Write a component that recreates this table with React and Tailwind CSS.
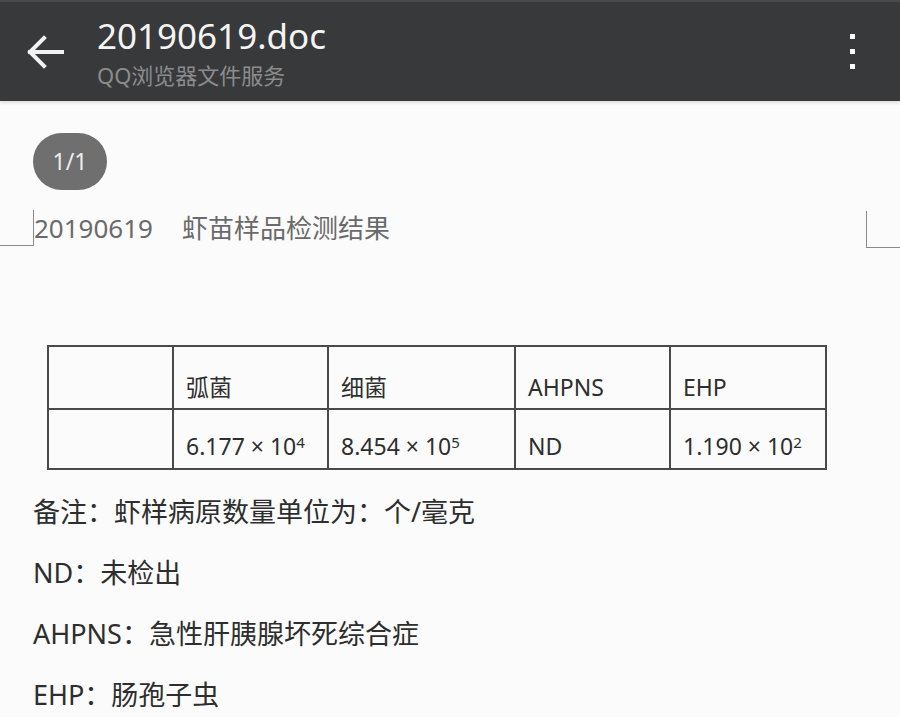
import React from "react";

const F = { fontFamily: '"Noto Sans", "Noto Sans CJK SC", sans-serif' };

function Sup({ base, exp }) {
  return (
    <span>
      {base}
      <span className="text-[15px] align-[7px]">{exp}</span>
    </span>
  );
}

export default function App() {
  const cols = ["w-[125px]", "w-[155px]", "w-[187px]", "w-[155px]", "flex-1"];
  const head = ["", "弧菌", "细菌", "AHPNS", "EHP"];
  const vals = [
    "",
    <Sup base="6.177 × 10" exp="4" />,
    <Sup base="8.454 × 10" exp="5" />,
    "ND",
    <Sup base="1.190 × 10" exp="2" />,
  ];
  return (
    <div className="w-[900px] h-[717px] overflow-hidden bg-[#fbfbfb]" style={F}>
      {/* Header */}
      <div className="h-[101px] bg-[#38393b] border-t-2 border-[#4a4b4d] flex items-start relative shadow-[0_2px_3px_rgba(0,0,0,0.12)]">
        <div className="w-[97px] h-full flex items-start pl-[27px] pt-[33px]">
          <svg width="38" height="34" viewBox="0 0 38 34" fill="none" stroke="#f2f2f2" strokeWidth="4" strokeLinecap="square">
            <path d="M3 17 H35" />
            <path d="M17 3 L3 17 L17 31" />
          </svg>
        </div>
        <div className="flex flex-col pt-[12px]">
          <div className="text-[35px] leading-[44px] text-[#f4f4f4]">20190619.doc</div>
          <div className="text-[22px] leading-[28px] text-[#8c8c8d] mt-[3px]">QQ浏览器文件服务</div>
        </div>
        <div className="ml-auto mr-[45px] pt-[32px] flex flex-col gap-[10px]">
          <div className="w-[5px] h-[5px] bg-white" />
          <div className="w-[5px] h-[5px] bg-white" />
          <div className="w-[5px] h-[5px] bg-white" />
        </div>
      </div>

      {/* Page */}
      <div className="pt-[32px]">
        <div className="ml-[33px] w-[74px] h-[57px] rounded-full bg-[#6f6f6f] flex items-center justify-center text-[23px] text-[#ececec]">
          1/1
        </div>

        <div className="mt-[20px] h-[36px] flex items-center relative">
          <div className="w-[34px] h-[36px] border-r border-b border-[#8a8a8a]" />
          <div className="text-[26px] text-[#6a6a6a] leading-[36px]">
            <span>20190619</span>
            <span className="ml-[29px]">虾苗样品检测结果</span>
          </div>
          <div className="ml-auto w-[34px] h-[37px] border-l border-b border-[#8a8a8a] mt-[2px]" />
        </div>

        {/* Table */}
        <div className="ml-[47px] mt-[99px] w-[780px] border-l-2 border-t-2 border-[#4a4a4a] flex flex-col text-[23px] text-[#2e2e2e]">
          <div className="flex h-[63px]">
            {head.map((h, i) => (
              <div key={i} className={`${cols[i]} border-r-2 border-b-2 border-[#4a4a4a] flex items-end pl-[12px] pb-[6px]`}>
                <span className="leading-[30px]">{h}</span>
              </div>
            ))}
          </div>
          <div className="flex h-[60px]">
            {vals.map((v, i) => (
              <div key={i} className={`${cols[i]} border-r-2 border-b-2 border-[#4a4a4a] flex items-end pl-[12px] pb-[7px]`}>
                <span className="leading-[30px]">{v}</span>
              </div>
            ))}
          </div>
        </div>

        {/* Notes */}
        <div className="ml-[33px] mt-[24px] flex flex-col gap-[25px] text-[27px] leading-[36px] text-[#2e2e2e]">
          <div>备注：虾样病原数量单位为：个/毫克</div>
          <div>ND：未检出</div>
          <div>AHPNS：急性肝胰腺坏死综合症</div>
          <div>EHP：肠孢子虫</div>
        </div>
      </div>
    </div>
  );
}
